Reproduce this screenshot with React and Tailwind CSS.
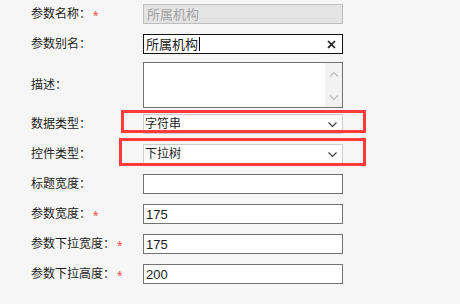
import React from "react";

const FONT = { fontFamily: '"Liberation Sans", "Noto Sans CJK SC", sans-serif' };

function Star() {
  return (
    <span className="ml-[2px] text-[14px] leading-none text-[#ff4a4a] relative top-[2px]">*</span>
  );
}

function Label({ text, star, className = "" }) {
  return (
    <div className={"w-[112px] shrink-0 flex items-center text-[12px] text-[#1c1c1c] " + className}>
      <span>{text}</span>
      {star && <Star />}
    </div>
  );
}

function TextInput({ value }) {
  return (
    <div className="w-[200px] h-[20px] border border-[#737373] bg-white flex items-center pl-[2px] text-[13px] text-[#1c1c1c] leading-none">
      {value}
    </div>
  );
}

function Chevron({ up, color = "#bdbdbd" }) {
  return (
    <svg width="10" height="6" viewBox="0 0 10 6">
      <path
        d={up ? "M1 5.5 L5 1.5 L9 5.5" : "M1 0.5 L5 4.5 L9 0.5"}
        fill="none"
        stroke={color}
        strokeWidth="1.2"
      />
    </svg>
  );
}

function Select({ value }) {
  return (
    <div className="w-[200px] h-[20px] border border-[#cdcdcd] bg-white flex items-center justify-between pl-[1px] pr-[4px] text-[12px] text-[#1c1c1c]">
      <span>{value}</span>
      <svg width="11" height="7" viewBox="0 0 11 7">
        <path d="M1.5 1.5 L5.5 5.5 L9.5 1.5" fill="none" stroke="#3a3a3a" strokeWidth="1.1" />
      </svg>
    </div>
  );
}

export default function App() {
  return (
    <div className="relative w-[460px] h-[304px] bg-[#f6f6f6] overflow-hidden" style={FONT}>
      <div className="pl-[31px] pt-[4px] flex flex-col">
        <div className="flex h-[20px]">
          <Label text="参数名称：" star />
          <div className="w-[200px] h-[20px] border border-[#bdbdbd] bg-[#e4e4e4] flex items-center pl-[3px] text-[13px] text-[#a3a3a3] leading-none">
            所属机构
          </div>
        </div>

        <div className="flex h-[20px] mt-[10px]">
          <Label text="参数别名：" />
          <div className="w-[200px] h-[20px] border border-[#141414] bg-white flex items-center pl-[2px] pr-[6px] text-[13px] text-[#1c1c1c] leading-none">
            <span>所属机构</span>
            <span className="w-px h-[14px] bg-black ml-px" />
            <span className="flex-1" />
            <svg width="9" height="9" viewBox="0 0 9 9">
              <path d="M1 1 L8 8 M8 1 L1 8" stroke="#1a1a1a" strokeWidth="1.7" />
            </svg>
          </div>
        </div>

        <div className="flex h-[46px] mt-[8px]">
          <Label text="描述：" className="pb-px" />
          <div className="w-[200px] h-[46px] border border-[#737373] bg-white flex justify-end">
            <div className="w-[17px] h-full bg-[#f2f2f2] flex flex-col items-center justify-between pt-[8px] pb-[6px]">
              <Chevron up />
              <Chevron />
            </div>
          </div>
        </div>

        <div className="flex h-[20px] mt-[6px]">
          <Label text="数据类型：" />
          <Select value="字符串" />
        </div>

        <div className="flex h-[20px] mt-[10px]">
          <Label text="控件类型：" />
          <Select value="下拉树" />
        </div>

        <div className="flex h-[20px] mt-[10px]">
          <Label text="标题宽度：" />
          <TextInput value="" />
        </div>

        <div className="flex h-[20px] mt-[10px]">
          <Label text="参数宽度：" star />
          <TextInput value="175" />
        </div>

        <div className="flex h-[20px] mt-[10px]">
          <Label text="参数下拉宽度：" star />
          <TextInput value="175" />
        </div>

        <div className="flex h-[20px] mt-[10px]">
          <Label text="参数下拉高度：" star />
          <TextInput value="200" />
        </div>
      </div>

      <div className="absolute left-[121px] top-[110px] w-[245px] h-[23px] border-[3px] border-[#ff3b3b] pointer-events-none" />
      <div className="absolute left-[119px] top-[138px] w-[247px] h-[28px] border-[3px] border-[#ff3b3b] pointer-events-none" />
    </div>
  );
}
